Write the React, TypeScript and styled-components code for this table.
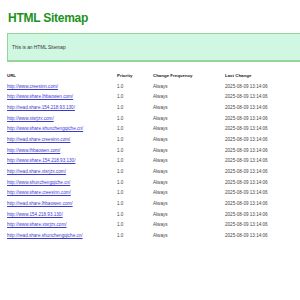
import React from "react";
import styled, { createGlobalStyle } from "styled-components";

const Global = createGlobalStyle`
  html, body { margin: 0; padding: 0; background: #fff; overflow: hidden; }
  body { font-family: "Liberation Sans", Arial, sans-serif; color: #333; }
`;

const Page = styled.div`
  width: 320px;
  padding: 0 0 0 7px;
`;

const Title = styled.h1`
  margin: 0;
  padding: 11px 0 0 1px;
  font-family: "Liberation Sans Narrow", "Liberation Sans", Arial, sans-serif;
  font-weight: bold;
  font-size: 12px;
  line-height: 14px;
  letter-spacing: -0.25px;
  color: #1c921c;
`;

const Intro = styled.div`
  margin-top: 8px;
  height: 29px;
  box-sizing: border-box;
  border: 1px solid #97d497;
  border-bottom-width: 2px;
  background: #cff7e2;
  display: flex;
  align-items: center;
  padding-left: 4px;
  font-size: 4.8px;
  color: #333;
`;

const Table = styled.div`
  margin-top: 8px;
  display: grid;
  grid-template-columns: 110px 36px 72px auto;
  grid-auto-rows: 10.68px;
  align-items: center;
  font-size: 4.6px;
`;

const Head = styled.div`
  font-weight: bold;
  color: #222;
  font-size: 4.4px;
`;

const Cell = styled.div`
  color: #444;
  white-space: nowrap;
`;

const Link = styled.a`
  color: #3b3bd0;
  text-decoration: underline;
`;

const urls = [
  "http://www.creesinn.com/",
  "http://www.share.lhbaowen.com/",
  "http://read.share.154.218.93.130/",
  "http://www.xtsrjzx.com/",
  "http://www.share.shunchengqiche.cn/",
  "http://read.share.creesinn.com/",
  "http://www.lhbaowen.com/",
  "http://www.share.154.218.93.130/",
  "http://read.share.xtsrjzx.com/",
  "http://www.shunchengqiche.cn/",
  "http://www.share.creesinn.com/",
  "http://read.share.lhbaowen.com/",
  "http://www.154.218.93.130/",
  "http://www.share.xtsrjzx.com/",
  "http://read.share.shunchengqiche.cn/",
];

export default function App() {
  return (
    <Page>
      <Global />
      <Title>HTML Sitemap</Title>
      <Intro>This is an HTML Sitemap</Intro>
      <Table>
        <Head>URL</Head>
        <Head>Priority</Head>
        <Head>Change Frequency</Head>
        <Head>Last Change</Head>
        {urls.map((u) => (
          <React.Fragment key={u}>
            <Cell>
              <Link href={u}>{u}</Link>
            </Cell>
            <Cell>1.0</Cell>
            <Cell>Always</Cell>
            <Cell>2025-08-09 13:14:06</Cell>
          </React.Fragment>
        ))}
      </Table>
    </Page>
  );
}
